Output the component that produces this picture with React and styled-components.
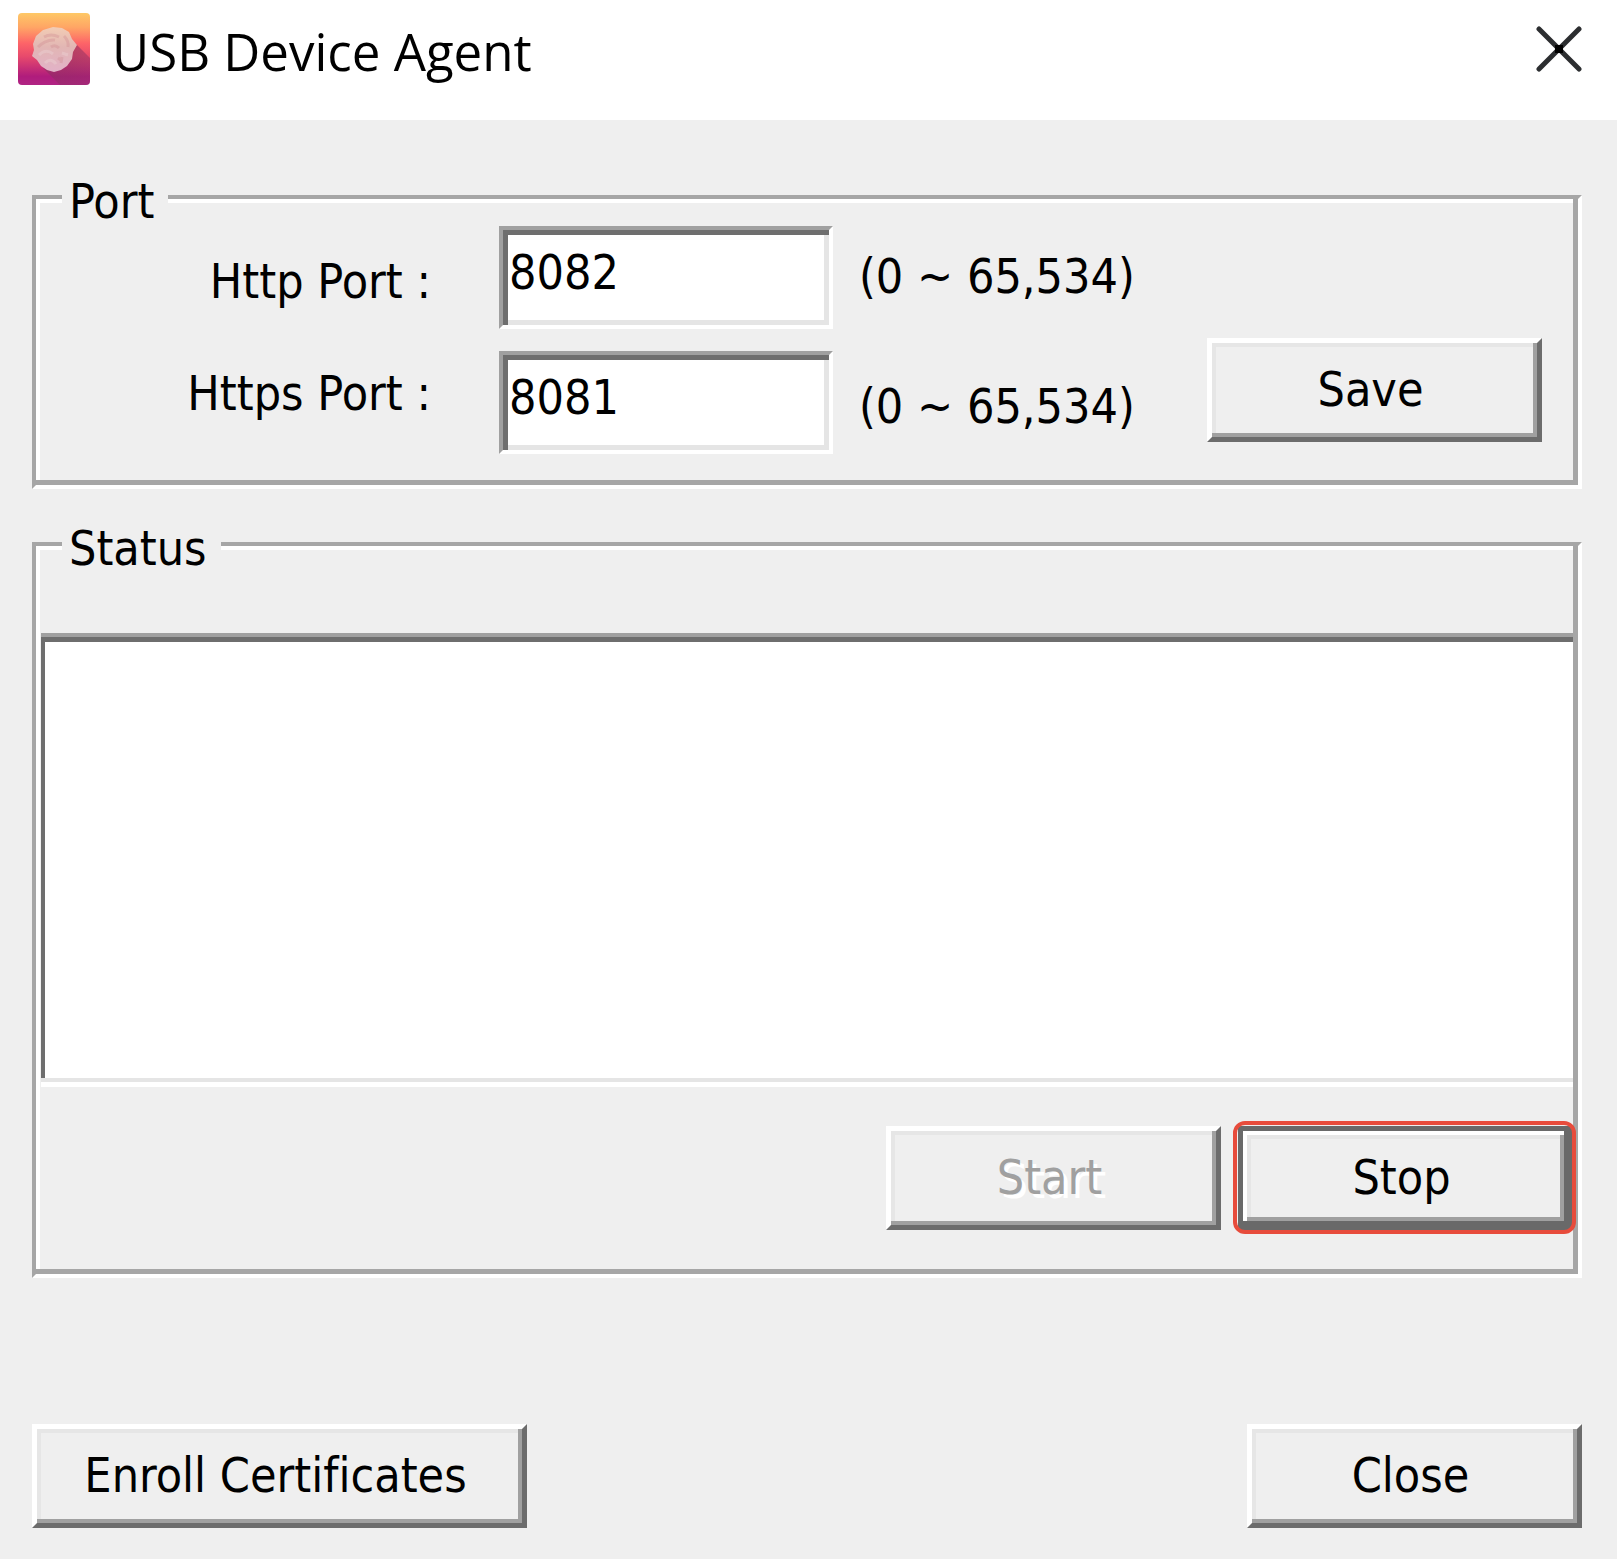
import { useState } from 'react'
import styled, { createGlobalStyle, css } from 'styled-components'

const AgentIcon = () => (
  <svg width="72" height="72" viewBox="0 0 72 72" aria-hidden="true">
    <defs>
      <linearGradient id="agentBg" x1="0" y1="0" x2="0" y2="1">
        <stop offset="0" stopColor="#fec866" />
        <stop offset="0.2" stopColor="#ffa565" />
        <stop offset="0.42" stopColor="#fd6468" />
        <stop offset="0.6" stopColor="#e84a6c" />
        <stop offset="0.88" stopColor="#b01c7c" />
        <stop offset="1" stopColor="#b02484" />
      </linearGradient>
      <linearGradient id="agentPrint" x1="0" y1="0" x2="0" y2="1">
        <stop offset="0" stopColor="#f2ccb4" />
        <stop offset="0.45" stopColor="#e2b6b4" />
        <stop offset="1" stopColor="#e2b2c8" />
      </linearGradient>
      <linearGradient id="agentShadow" x1="0" y1="0" x2="1" y2="1">
        <stop offset="0.2" stopColor="#8a3060" stopOpacity="0.65" />
        <stop offset="1" stopColor="#8a3060" stopOpacity="0.3" />
      </linearGradient>
      <clipPath id="agentClip">
        <rect width="72" height="72" rx="4" />
      </clipPath>
    </defs>
    <g clipPath="url(#agentClip)">
      <rect width="72" height="72" fill="url(#agentBg)" />
      <path d="M57 30 L72 45 V72 H42 L25 55 Z" fill="url(#agentShadow)" />
      <path
        d="M35 14 L44 15 L51 19 L54 26 L59 32 L55 39 L54 46 L49 53 L43 57 L36 59 L29 57 L23 53 L19 47 L14 43 L16 37 L15 31 L18 23 L25 17 Z"
        fill="url(#agentPrint)"
      />
      <path
        d="M26 24 Q33 20 41 24 M20 34 Q28 26 37 27 M33 34 Q37 31 41 35 M46 23 Q51 28 50 34 M40 45 L44 48 M43 50 L44 44"
        fill="none"
        stroke="#cf8a90"
        strokeWidth="3"
        opacity="0.35"
      />
      <path
        d="M21 42 Q28 35 35 41 M27 50 Q33 44 38 51 M44 40 L50 42"
        fill="none"
        stroke="#ecd0d2"
        strokeWidth="3"
        opacity="0.45"
      />
    </g>
  </svg>
)

const CrossIcon = () => (
  <svg width="46" height="46" viewBox="0 0 46 46" aria-hidden="true">
    <path d="M3 3 L43 43 M43 3 L3 43" stroke="#2c2e30" strokeWidth="5" strokeLinecap="round" />
    <rect x="19" y="19" width="8" height="8" fill="#000" />
  </svg>
)

const App = () => {
  const [ports, setPorts] = useState({ http: '8082', https: '8081' })
  const [running, setRunning] = useState(true)

  const handlePort = (e) => {
    setPorts({ ...ports, [e.target.name]: e.target.value })
  }

  return (
    <>
      <GlobalStyle />
      <TitleBar>
        <AgentIcon />
        <Title>USB Device Agent</Title>
        <CrossButton type="button" aria-label="Close window">
          <CrossIcon />
        </CrossButton>
      </TitleBar>
      <Content>
        <Group>
          <Legend>Port</Legend>
          <PortForm>
            <LabelColumn>
              <label htmlFor="http">Http Port :</label>
              <label htmlFor="https">Https Port :</label>
            </LabelColumn>
            <InputColumn>
              <PortInput id="http" name="http" value={ports.http} onChange={handlePort} />
              <PortInput id="https" name="https" value={ports.https} onChange={handlePort} />
            </InputColumn>
            <RangeColumn>
              <span>(0 ~ 65,534)</span>
              <span>(0 ~ 65,534)</span>
            </RangeColumn>
            <SaveButton type="button">Save</SaveButton>
          </PortForm>
        </Group>
        <Group>
          <Legend id="status">Status</Legend>
          <StatusLog aria-labelledby="status" readOnly value="" />
          <StatusButtons>
            <Button type="button" disabled={running} onClick={() => setRunning(true)}>
              Start
            </Button>
            <StopButton type="button" disabled={!running} onClick={() => setRunning(false)}>
              Stop
            </StopButton>
          </StatusButtons>
        </Group>
        <Footer>
          <Button type="button" $wide>
            Enroll Certificates
          </Button>
          <Button type="button">Close</Button>
        </Footer>
      </Content>
    </>
  )
}

const GlobalStyle = createGlobalStyle`
  * {
    box-sizing: border-box;
  }
  body {
    margin: 0;
    background: #efefef;
    color: #000;
    font-family: 'DejaVu Sans Condensed', 'Open Sans', sans-serif;
    font-size: 48px;
    font-variant-ligatures: none;
    line-height: 56px;
  }
  button, input, textarea {
    font: inherit;
    font-variant-ligatures: none;
    color: inherit;
  }
`

/* 3D edges: outer line is the border, inner line is the inset shadow */
const sunken = css`
  border: 4px solid;
  border-color: #a0a0a0 #fff #fff #a0a0a0;
  box-shadow: inset 5px 5px #6e6e6e, inset -5px -5px #e5e5e5;
`
const raised = css`
  border: 5px solid;
  border-color: #fff #6c6c6c #6c6c6c #fff;
  box-shadow: inset -4px -4px #a0a0a0, inset 4px 4px #e6e6e6;
`

const TitleBar = styled.header`
  display: flex;
  align-items: center;
  height: 120px;
  padding: 0 35px 22px 18px;
  background: #fff;
`
const Title = styled.h1`
  flex: 1;
  margin: 4px 0 0 22px;
  font-family: 'Open Sans', sans-serif;
  font-size: 51px;
  font-weight: 400;
`
const CrossButton = styled.button`
  display: flex;
  padding: 0;
  border: none;
  background: none;
`

const Content = styled.main`
  display: flex;
  flex-direction: column;
  gap: 27px;
  padding: 49px 35px 31px 32px;
`
const Group = styled.fieldset`
  min-width: 0;
  margin: 0;
  padding: 0 5px;
  border: 4px solid;
  border-color: #a6a6a6 #fff #fff #a6a6a6;
  box-shadow: inset -5px -5px #a6a6a6, inset 4px 4px #fff;
`
const Legend = styled.legend`
  margin-left: 21px;
  padding: 8px 14px 0 7px;
  line-height: 48px;
  background: #efefef;
`

const PortForm = styled.div`
  display: flex;
  align-items: center;
  padding: 1px 31px 31px 0;
`
const LabelColumn = styled.div`
  display: flex;
  flex-direction: column;
  gap: 56px;
  width: 458px;
  padding: 0 68px 6px 0;
  text-align: right;
`
const InputColumn = styled.div`
  display: flex;
  flex-direction: column;
  gap: 22px;
  width: 334px;
`
const RangeColumn = styled.div`
  display: flex;
  flex-direction: column;
  gap: 74px;
  margin-left: 26px;
  padding-top: 2px;
`
const PortInput = styled.input`
  ${sunken}
  width: 100%;
  height: 103px;
  padding: 0 6px 12px;
  border-radius: 0;
  outline: none;
  background: #fff;
`

const Button = styled.button`
  ${raised}
  width: ${(props) => (props.$wide ? '495px' : '335px')};
  height: 104px;
  padding: 0 8px 2px 0;
  border-radius: 0;
  background: #efefef;
  &:disabled {
    color: #a0a0a0;
    text-shadow: 4px 4px #fff;
  }
`
const SaveButton = styled(Button)`
  align-self: flex-end;
  margin: 0 0 12px auto;
`
/* default button, with a red frame around it */
const StopButton = styled(Button)`
  position: relative;
  border-color: #696969;
  box-shadow: inset -4px -4px #696969, inset 4px 4px #fff, inset -8px -8px #a0a0a0,
    inset 8px 8px #e6e6e6;
  &::after {
    content: '';
    position: absolute;
    inset: -10px -8px -9px -10px;
    border: 4px solid #e74c3c;
    border-radius: 12px;
  }
`

const StatusLog = styled.textarea`
  display: block;
  width: 100%;
  height: 454px;
  margin-top: 61px;
  padding: 8px;
  border: solid;
  border-width: 4px 0 5px;
  border-color: #a0a0a0 #fff #fff;
  border-radius: 0;
  box-shadow: inset 0 5px #6e6e6e, inset 0 -4px #e5e5e5, inset 4px 0 #6e6e6e;
  outline: none;
  resize: none;
  background: #fff;
`
const StatusButtons = styled.div`
  display: flex;
  justify-content: flex-end;
  gap: 17px;
  padding: 39px 0 44px;
`

const Footer = styled.footer`
  display: flex;
  justify-content: space-between;
  margin-top: 119px;
`

export default App
